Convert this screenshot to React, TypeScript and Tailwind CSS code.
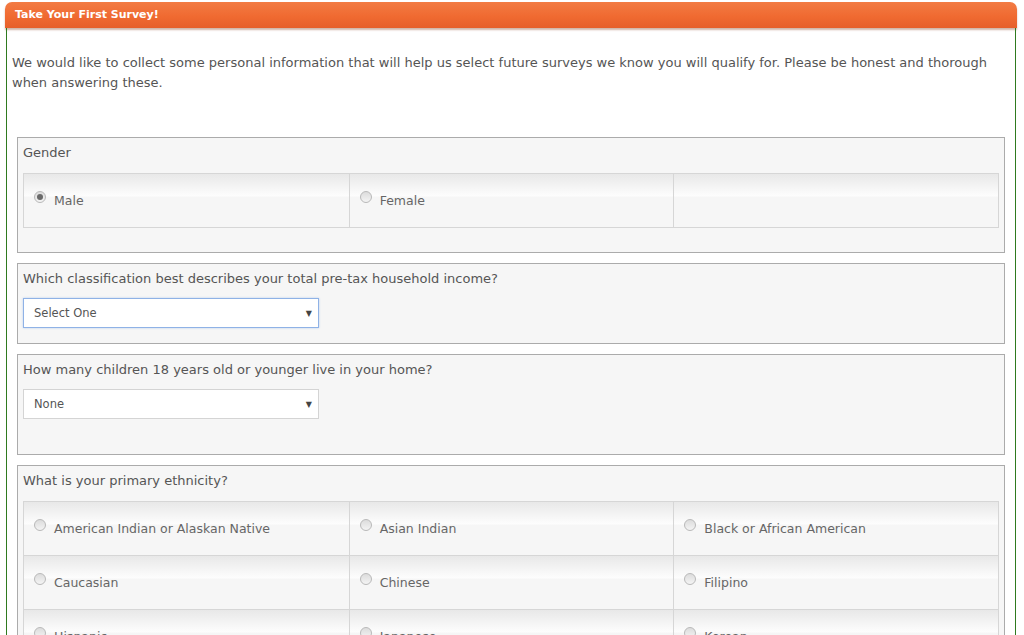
export default function App() {
  const font = { fontFamily: '"DejaVu Sans", Verdana, sans-serif' };

  const Radio = ({ checked = false }: { checked?: boolean }) => (
    <span className="mt-[1px] flex h-[12px] w-[12px] shrink-0 items-center justify-center rounded-full border border-[#b9b9b9] bg-[linear-gradient(180deg,#dcdcdc,#f4f4f4)]">
      {checked && <span className="h-[6px] w-[6px] rounded-full bg-[#6a6a6a]" />}
    </span>
  );

  const Cell = ({ label, checked }: { label?: string; checked?: boolean }) => (
    <div className="flex h-[53px] items-start gap-[8px] bg-[linear-gradient(180deg,#e8e8e8_0px,#fdfdfd_22px,#f6f6f6_23px,#f6f6f6_100%)] pl-[10px] pt-[16px]">
      {label && (
        <>
          <Radio checked={checked} />
          <span className="pt-[2px] text-[12.5px] text-[#666]">{label}</span>
        </>
      )}
    </div>
  );

  const Select = ({ value, focus }: { value: string; focus?: boolean }) => (
    <div
      className={
        focus
          ? "flex h-[30px] w-[296px] items-center justify-between border border-[#8fb2e6] bg-white pl-[10px] pr-[6px] pt-[2px] shadow-[0_0_2px_rgba(100,150,230,0.4)]"
          : "flex h-[30px] w-[296px] items-center justify-between border border-[#d4d4d4] bg-white pl-[10px] pr-[6px] pt-[2px]"
      }
    >
      <span className="text-[11.5px] text-[#555]">{value}</span>
      <span className="text-[8px] text-[#444]">▼</span>
    </div>
  );

  const ethnicity = [
    "American Indian or Alaskan Native",
    "Asian Indian",
    "Black or African American",
    "Caucasian",
    "Chinese",
    "Filipino",
    "Hispanic",
    "Japanese",
    "Korean",
  ];

  const cellBorder = (i: number) =>
    [i % 3 !== 0 ? "border-l border-[#d6d6d6]" : "", i >= 3 ? "border-t border-[#d6d6d6]" : ""].join(" ");

  return (
    <div className="h-[635px] w-[1024px] overflow-hidden bg-white pt-[2px]" style={font}>
      <div className="ml-[5px] w-[1012px]">
        <div className="flex h-[26px] items-center rounded-t-[7px] bg-[linear-gradient(180deg,#f27b44_0%,#f06a31_55%,#e65f2a_100%)] pl-[10px] shadow-[0_2px_2px_rgba(120,40,0,0.35)]">
          <span className="text-[11px] font-bold text-white">Take Your First Survey!</span>
        </div>
        <div className="mx-[1px] border-x border-[#2f7a1f] px-[5px] pb-[20px] pt-[25px]">
          <p className="text-[13px] leading-[20px] text-[#555]">
            We would like to collect some personal information that will help us select future surveys we know you will qualify for. Please be honest and thorough when answering these.
          </p>

          <div className="mx-[5px] mt-[44px] flex flex-col gap-[10px]">
            <div className="h-[116px] border border-[#ababab] bg-[#f6f6f6] px-[5px] pt-[6px]">
              <div className="text-[13px] leading-[18px] text-[#555]">Gender</div>
              <div className="mt-[11px] grid grid-cols-3 border border-[#d6d6d6]">
                {["Male", "Female", ""].map((l, i) => (
                  <div key={i} className={cellBorder(i)}>
                    <Cell label={l || undefined} checked={i === 0} />
                  </div>
                ))}
              </div>
            </div>

            <div className="h-[81px] border border-[#ababab] bg-[#f6f6f6] px-[5px] pt-[6px]">
              <div className="text-[13px] leading-[18px] text-[#555]">
                Which classification best describes your total pre-tax household income?
              </div>
              <div className="mt-[10px]">
                <Select value="Select One" focus />
              </div>
            </div>

            <div className="h-[101px] border border-[#ababab] bg-[#f6f6f6] px-[5px] pt-[6px]">
              <div className="text-[13px] leading-[18px] text-[#555]">
                How many children 18 years old or younger live in your home?
              </div>
              <div className="mt-[10px]">
                <Select value="None" />
              </div>
            </div>

            <div className="border border-[#ababab] bg-[#f6f6f6] px-[5px] pt-[6px]">
              <div className="text-[13px] leading-[18px] text-[#555]">What is your primary ethnicity?</div>
              <div className="mt-[11px] grid grid-cols-3 border border-[#d6d6d6]">
                {ethnicity.map((e, i) => (
                  <div key={e} className={cellBorder(i)}>
                    <Cell label={e} />
                  </div>
                ))}
              </div>
            </div>
          </div>
        </div>
      </div>
    </div>
  );
}
